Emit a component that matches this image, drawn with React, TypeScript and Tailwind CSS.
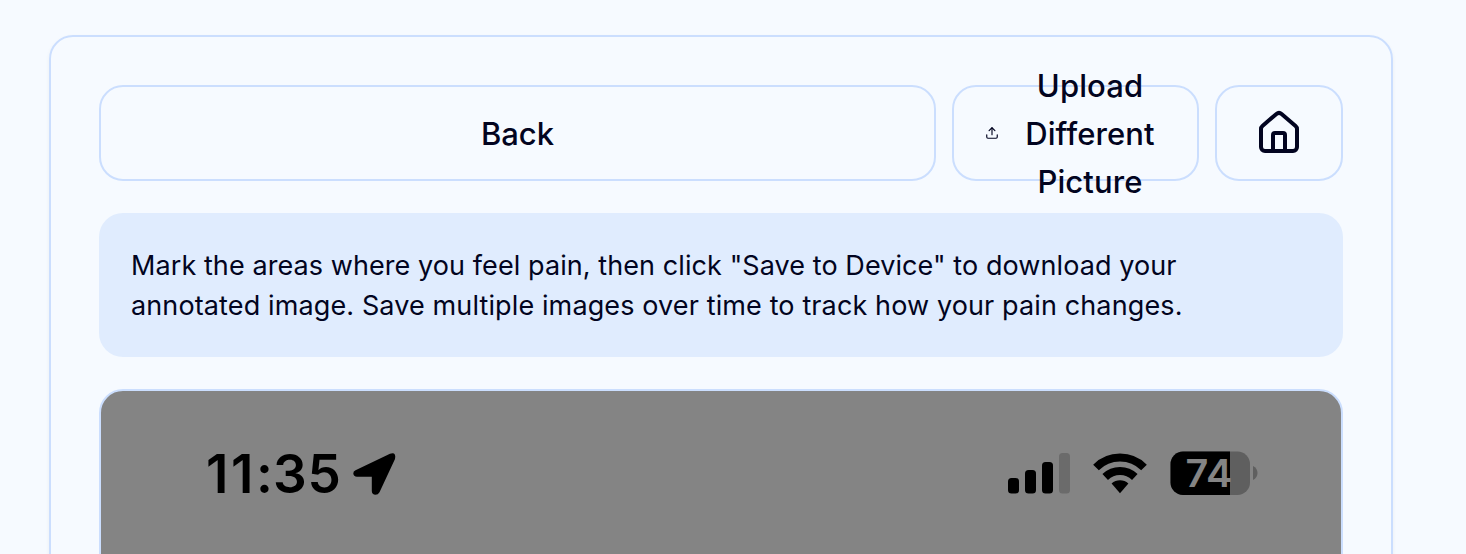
import { House, Upload } from "lucide-react";

const buttonClass =
  "flex h-24 items-center justify-center rounded-3xl border-2 border-[#cbdefe] bg-[#f6faff] text-[31px] leading-[48px] font-medium";

function StatusIcons() {
  return (
    <svg width="252" height="46" viewBox="1006 450 252 46" className="block">
      <g fill="#000">
        <rect x="1008" y="478" width="11" height="15.5" rx="3.5" />
        <rect x="1025" y="470" width="11" height="23.5" rx="3.5" />
        <rect x="1042" y="462" width="11" height="31.5" rx="3.5" />
        <rect x="1059" y="453" width="11" height="40.5" rx="3.5" fill="#6b6b6b" />
      </g>
      <g fill="none" stroke="#000" strokeWidth="8">
        <path d="M1096 467.5A34 34 0 0 1 1144 467.5" />
        <path d="M1105.2 477A21.4 21.4 0 0 1 1134.8 477" />
      </g>
      <path d="M1111.6 483.5A12.5 12.5 0 0 1 1128.4 483.5L1120 493.3Z" fill="#000" />
      <clipPath id="battery">
        <rect x="1170.5" y="451.5" width="79.5" height="43.5" rx="12.5" />
      </clipPath>
      <g clipPath="url(#battery)">
        <rect x="1170" y="451" width="80" height="44" fill="#5f5f5f" />
        <rect x="1170" y="451" width="60" height="44" fill="#000" />
      </g>
      <path d="M1253 466C1259 469 1259 477 1253 480Z" fill="#5f5f5f" />
      <text
        x="1185.5"
        y="487"
        fill="#848484"
        fontFamily="Inter, sans-serif"
        fontSize="38"
        fontWeight="600"
        textLength="47"
        lengthAdjust="spacingAndGlyphs"
      >
        74
      </text>
    </svg>
  );
}

export default function App() {
  return (
    <div className="h-[554px] overflow-hidden bg-[#f6faff] pt-[35px] pr-[73px] pl-[49px] font-['Inter',sans-serif] text-[#020420]">
      <main className="h-[700px] rounded-3xl border-2 border-[#cbdefe] p-12 shadow-[0_2px_4px_0_rgba(0,0,0,0.05)]">
        <div className="flex gap-4">
          <button className={`${buttonClass} flex-1`}>
            <span className="pt-0.5 tracking-[-0.1px]">Back</span>
          </button>
          <button className={`${buttonClass} w-[247px] gap-[25px] pr-[10px]`}>
            <Upload className="h-[14px] w-[14px] shrink-0" />
            <span className="w-[132px] pt-px text-center tracking-[0.1px]">Upload Different Picture</span>
          </button>
          <button className={`${buttonClass} w-32`} aria-label="Home">
            <House className="size-12" />
          </button>
        </div>
        <p className="mt-8 h-36 rounded-3xl bg-[#e0ecfe] px-8 pt-[33px] text-[27px] leading-10 whitespace-nowrap">
          <span className="tracking-[0.08px]">
            Mark the areas where you feel pain, then click "Save to Device" to download your
          </span>
          <br />
          <span className="tracking-[0.12px]">
            annotated image. Save multiple images over time to track how your pain changes.
          </span>
        </p>
        <section className="mt-8 flex h-[300px] items-start justify-between rounded-3xl border-2 border-[#cbdefe] bg-[#848484] pt-[39px] pr-[83px] pl-[94px]">
          <svg width="212" height="88" viewBox="195 430 212 88" className="block">
            <text
              x="206 231 256 273 307.5"
              y="493"
              fontFamily="Inter, sans-serif"
              fontSize="53"
              fontWeight="600"
            >
              11:35
            </text>
            <path
              d="M355.5 470.2L390 453.8Q396.5 451.8 395 459L379.5 492.2Q378 494.8 375.5 494.8Q372 494.8 371.8 491V476.7H357Q353.5 476.5 353.3 473.5Q353.2 471.2 355.5 470.2Z"
              fill="#000"
            />
          </svg>
          <div className="pt-5">
            <StatusIcons />
          </div>
        </section>
      </main>
    </div>
  );
}
